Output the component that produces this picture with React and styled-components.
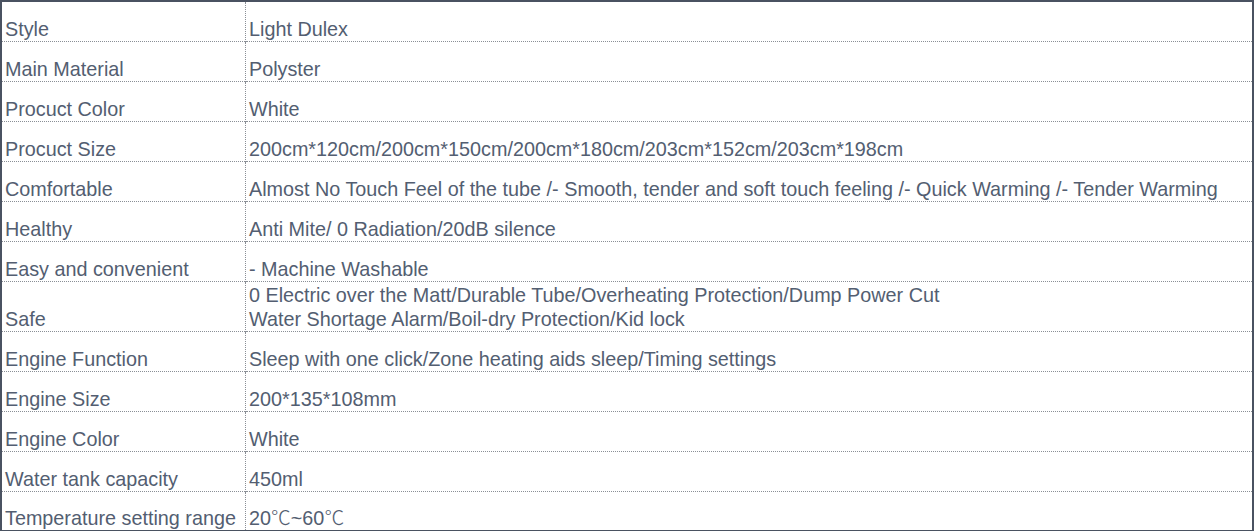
import React from "react";
import styled, { createGlobalStyle } from "styled-components";

const rows = [
  ["Style", ["Light Dulex"]],
  ["Main Material", ["Polyster"]],
  ["Procuct Color", ["White"]],
  ["Procuct Size", ["200cm*120cm/200cm*150cm/200cm*180cm/203cm*152cm/203cm*198cm"]],
  [
    "Comfortable",
    ["Almost No Touch Feel of the tube /- Smooth, tender and soft touch feeling /- Quick Warming /- Tender Warming"],
  ],
  ["Healthy", ["Anti Mite/ 0 Radiation/20dB silence"]],
  ["Easy and convenient", ["- Machine Washable"]],
  [
    "Safe",
    [
      "0 Electric over the Matt/Durable Tube/Overheating Protection/Dump Power Cut",
      "Water Shortage Alarm/Boil-dry Protection/Kid lock",
    ],
  ],
  ["Engine Function", ["Sleep with one click/Zone heating aids sleep/Timing settings"]],
  ["Engine Size", ["200*135*108mm"]],
  ["Engine Color", ["White"]],
  ["Water tank capacity", ["450ml"]],
  ["Temperature setting range", ["20℃~60℃"]],
];

const GlobalStyle = createGlobalStyle`
  html, body {
    margin: 0;
    padding: 0;
    background: #ffffff;
  }
`;

const Spec = styled.table`
  width: 1254px;
  box-sizing: border-box;
  border-collapse: collapse;
  border: 2px solid #4a5261;
  font-family: "Liberation Sans", Arial, sans-serif;
  font-size: 19.8px;
  color: #535e71;
  table-layout: fixed;
`;

const Row = styled.tr`
  height: ${(p) => (p.$tall ? 50 : 40)}px;
  border-bottom: 1px dotted #8a8f96;
  &:last-child {
    border-bottom: none;
  }
`;

const Cell = styled.td`
  vertical-align: bottom;
  padding: 0 4px 0 3px;
  line-height: 24px;
  white-space: nowrap;
  & + & {
    border-left: 1px dotted #8a8f96;
  }
`;

const Label = styled(Cell)`
  width: 236px;
`;

const Line = styled.div``;

const Degree = styled.span`
  font-family: "Noto Sans CJK SC", sans-serif;
  font-weight: 300;
`;

const renderValue = (v) =>
  v.split("℃").flatMap((part, i, all) =>
    i < all.length - 1 ? [part, <Degree key={i}>℃</Degree>] : [part]
  );

export default function App() {
  return (
    <>
      <GlobalStyle />
      <Spec>
        <tbody>
          {rows.map(([label, value]) => (
            <Row key={label} $tall={value.length > 1}>
              <Label>{label}</Label>
              <Cell>
                {value.map((v) => (
                  <Line key={v}>{renderValue(v)}</Line>
                ))}
              </Cell>
            </Row>
          ))}
        </tbody>
      </Spec>
    </>
  );
}
